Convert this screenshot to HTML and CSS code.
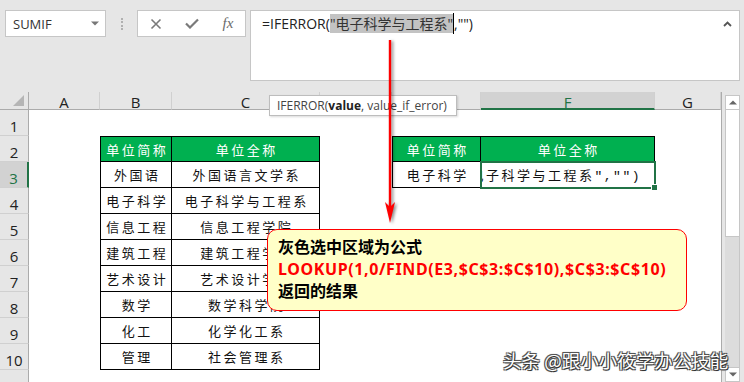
FILE: index.html
```html
<!DOCTYPE html>
<html lang="zh-CN">
<head>
    <meta charset="UTF-8">
    <title>IFERROR</title>
    <link rel="stylesheet" href="styles.css">
</head>
<body>
    <div class="formula-bar">
        <div class="name-box">
            <span>SUMIF</span>
            <svg class="drop" width="8" height="5" viewBox="0 0 8 5"><path d="M0 0.5h8L4 4.5z"/></svg>
        </div>
        <div class="grip"></div>
        <div class="fx-buttons">
            <!-- cancel -->
            <svg width="12" height="12" viewBox="0 0 12 12"><path d="M1.5 1.5l9 9M10.5 1.5l-9 9" stroke="#7a7a7a" stroke-width="1.6"/></svg>
            <!-- enter -->
            <svg width="14" height="11" viewBox="0 0 14 11"><path d="M1 5.5l4 4L13 1.5" stroke="#7a7a7a" stroke-width="2.2" fill="none"/></svg>
            <span class="fx">fx</span>
        </div>
        <div class="formula">
            <span class="ftext">=IFERROR(<span class="hl">"电子科学与工程系"</span><i class="caret"></i>,"")</span>
            <svg class="collapse" width="9" height="6" viewBox="0 0 9 6"><path d="M1 5l3.5-3.5L8 5" stroke="#555" stroke-width="1.8" fill="none"/></svg>
        </div>
    </div>

    <div class="workbook">
        <div class="sheet">
            <div class="col-heads">
                <div class="ch corner"><svg width="11" height="11" viewBox="0 0 11 11"><path d="M11 0v11H0z" fill="#b5b5b5"/></svg></div>
                <div class="ch" style="width:71px">A</div>
                <div class="ch" style="width:72px">B</div>
                <div class="ch" style="width:148px">C</div>
                <div class="ch" style="width:72px">D</div>
                <div class="ch" style="width:89px">E</div>
                <div class="ch on" style="width:174px">F</div>
                <div class="ch" style="width:66px">G</div>
            </div>
            <div class="sheet-body">
                <div class="row-heads">
                    <div class="rh">1</div>
                    <div class="rh">2</div>
                    <div class="rh on">3</div>
                    <div class="rh">4</div>
                    <div class="rh">5</div>
                    <div class="rh">6</div>
                    <div class="rh">7</div>
                    <div class="rh">8</div>
                    <div class="rh">9</div>
                    <div class="rh">10</div>
                    <div class="rh">11</div>
                </div>
                <div class="cells">
                    <div class="tbl t1">
                        <div class="cell hd">单位简称</div><div class="cell hd">单位全称</div>
                        <div class="cell">外国语</div><div class="cell">外国语言文学系</div>
                        <div class="cell">电子科学</div><div class="cell">电子科学与工程系</div>
                        <div class="cell">信息工程</div><div class="cell">信息工程学院</div>
                        <div class="cell">建筑工程</div><div class="cell">建筑工程学院</div>
                        <div class="cell">艺术设计</div><div class="cell">艺术设计学院</div>
                        <div class="cell">数学</div><div class="cell">数学科学院</div>
                        <div class="cell">化工</div><div class="cell">化学化工系</div>
                        <div class="cell">管理</div><div class="cell">社会管理系</div>
                    </div>
                    <div class="tbl t2">
                        <div class="cell hd">单位简称</div><div class="cell hd">单位全称</div>
                        <div class="cell">电子科学</div>
                        <div class="cell active"><span class="clip"><span>电子科学与工程系<span class="asc">","")</span></span></span></div>
                    </div>
                </div>
            </div>
        </div>
        <div class="vscroll">
            <div class="sb-up"><svg width="8" height="5" viewBox="0 0 8 5"><path d="M0 4.5h8L4 0.5z" fill="#666"/></svg></div>
            <div class="sb-thumb"></div>
            <div class="sb-track"></div>
            <div class="sb-down"><svg width="8" height="5" viewBox="0 0 8 5"><path d="M0 0.5h8L4 4.5z" fill="#666"/></svg></div>
        </div>
    </div>

    <!-- overlays -->
    <div class="tip">IFERROR(<b>value</b>, value_if_error)</div>

    <svg class="arrow" width="24" height="192" viewBox="0 0 24 192">
        <path d="M10 4V172" stroke="#ff0000" stroke-width="2.4"/>
        <path d="M10 187L5 166L10 171L15 166z" fill="#ff0000"/>
    </svg>

    <div class="callout">
        <div>灰色选中区域为公式</div>
        <div class="red">LOOKUP(1,0/FIND(E3,$C$3:$C$10),$C$3:$C$10)</div>
        <div>返回的结果</div>
    </div>

    <div class="mark">头条 @跟小小筱学办公技能</div>
</body>
</html>
```

FILE: styles.css
```css
body {
    margin: 0;
    width: 744px;
    height: 382px;
    overflow: hidden;
    position: relative;
    background: #e6e6e6;
    font-family: "Open Sans", "Noto Sans CJK SC", sans-serif;
    color: #222;
}

/* formula bar */
.formula-bar {
    display: flex;
    align-items: flex-start;
    height: 92px;
    padding-top: 10px;
    box-sizing: border-box;
}

.name-box {
    margin-left: 5px;
    width: 101px;
    height: 27px;
    box-sizing: border-box;
    border: 1px solid #c6c6c6;
    background: #fff;
    display: flex;
    align-items: center;
    justify-content: space-between;
    padding: 0 6px 0 7px;
    font-size: 13px;
    color: #333;
}

.drop { fill: #777; }

.grip {
    margin: 8px 0 0 15px;
    height: 12px;
    border-left: 2px dotted #b0b0b0;
}

.fx-buttons {
    margin-left: 14px;
    width: 109px;
    height: 27px;
    box-sizing: border-box;
    border: 1px solid #c6c6c6;
    background: #fff;
    display: grid;
    grid-template-columns: repeat(3, 36px);
    align-items: center;
    justify-items: center;
}

.fx {
    font-family: "Liberation Serif", serif;
    font-style: italic;
    font-size: 15px;
    color: #6a6a6a;
    line-height: 1;
}

.formula {
    margin-left: 4px;
    width: 490px;
    height: 71px;
    box-sizing: border-box;
    border: 1px solid #c6c6c6;
    background: #fff;
    display: flex;
    align-items: flex-start;
    padding: 2px 7px 0 11px;
    font-size: 14px;
    line-height: 21px;
    color: #222;
}

.ftext { white-space: nowrap; }

.hl {
    background: #c3c3c3;
    color: #333;
}

.caret {
    display: inline-block;
    width: 1px;
    height: 21px;
    background: #000;
    vertical-align: top;
}

.collapse { margin: 8px 0 0 auto; }

/* sheet */
.workbook {
    display: flex;
    align-items: flex-start;
}

.sheet {
    width: 722px;
    border-right: 1px solid #ababab;
    box-sizing: border-box;
}

.col-heads {
    display: flex;
    height: 18px;
}

.ch {
    box-sizing: border-box;
    height: 18px;
    border-right: 1px solid #d0d0d0;
    border-bottom: 1px solid #ababab;
    text-align: center;
    font-size: 15px;
    line-height: 18px;
    padding-top: 1px;
    color: #222;
}

.ch.corner {
    width: 29px;
    border-right-color: #ababab;
    display: flex;
    justify-content: flex-end;
    align-items: flex-end;
    padding: 0 4px 3px 0;
}

.ch.on, .rh.on {
    background: #d2d2d2;
    color: #217346;
}

.ch.on { border-bottom: 2px solid #217346; }

.sheet-body { display: flex; }

.row-heads { width: 29px; }

.rh {
    box-sizing: border-box;
    height: 26px;
    overflow: hidden;
    border-right: 1px solid #ababab;
    border-bottom: 1px solid #d0d0d0;
    text-align: center;
    font-size: 15px;
    line-height: 20px;
    padding-top: 6px;
    color: #222;
}

.rh.on { border-right: 2px solid #217346; }

.cells {
    width: 692px;
    background: #fff;
    display: grid;
    grid-template-columns: 71px 72px 148px 72px 89px 174px 66px;
    grid-template-rows: repeat(11, 26px);
}

.tbl {
    display: grid;
    box-sizing: border-box;
    border-top: 1px solid #000;
    border-left: 1px solid #000;
}

.t1 {
    grid-column: 2 / 4;
    grid-row: 2 / 11;
    grid-template-columns: 71px 148px;
    grid-template-rows: 25px repeat(8, 26px);
}

.t2 {
    grid-column: 5 / 7;
    grid-row: 2 / 4;
    grid-template-columns: 88px 174px;
    grid-template-rows: 25px 26px;
}

.cell {
    display: flex;
    align-items: center;
    justify-content: center;
    border-right: 1px solid #000;
    border-bottom: 1px solid #000;
    font-family: "Noto Sans CJK SC", sans-serif;
    font-size: 13px;
    letter-spacing: 2.5px;
    padding-left: 2.5px;
    color: #111;
    white-space: nowrap;
}

.cell.hd {
    background: #00b050;
    color: #fff;
}

.cell.active {
    position: relative;
    padding: 0 13px 0 0;
    outline: 2px solid #217346;
    outline-offset: -1px;
}

.cell.active::after {
    content: "";
    position: absolute;
    right: -4px;
    bottom: -4px;
    width: 5px;
    height: 5px;
    background: #217346;
    border: 1px solid #fff;
}

.clip {
    flex: 1;
    min-width: 0;
    overflow: hidden;
    display: flex;
    justify-content: flex-end;
}

.asc {
    font-family: "Liberation Mono", monospace;
    letter-spacing: 1.5px;
}

/* scroll bar */
.vscroll {
    margin: 3px 0 0 3px;
    width: 15px;
    height: 287px;
    display: flex;
    flex-direction: column;
}

.sb-up, .sb-down {
    height: 15px;
    box-sizing: border-box;
    border: 1px solid #c6c6c6;
    background: #fff;
    display: flex;
    align-items: center;
    justify-content: center;
}

.sb-thumb {
    height: 127px;
    box-sizing: border-box;
    border: 1px solid #c6c6c6;
    border-top: 0;
    background: #fff;
}

.sb-track {
    flex: 1;
    background: #dcdcdc;
    border-right: 1px solid #c6c6c6;
}

/* overlays */
.tip {
    position: absolute;
    left: 269px;
    top: 95px;
    width: 188px;
    height: 21px;
    box-sizing: border-box;
    border: 1px solid #bdbdbd;
    background: #fff;
    box-shadow: 1px 1px 2px rgba(0, 0, 0, 0.15);
    padding-left: 7px;
    font-size: 12px;
    line-height: 19px;
    color: #444;
    white-space: nowrap;
}

.tip b { color: #222; }

.arrow {
    position: absolute;
    left: 380px;
    top: 36px;
    filter: drop-shadow(2px 1px 1.5px rgba(0, 0, 0, 0.45));
}

.callout {
    position: absolute;
    left: 267px;
    top: 229px;
    width: 420px;
    height: 82px;
    box-sizing: border-box;
    border: 1px solid #ff0000;
    border-radius: 10px;
    background: #ffffc8;
    padding: 6px 0 0 10px;
    font-family: "Noto Sans", "Noto Sans CJK SC", sans-serif;
    font-size: 16px;
    font-weight: bold;
    line-height: 22px;
    color: #000;
}

.callout .red {
    color: #ff0000;
    letter-spacing: 0.6px;
}

.mark {
    position: absolute;
    left: 503px;
    top: 347px;
    font-family: "Noto Sans CJK SC", sans-serif;
    font-size: 18.5px;
    color: #fff;
    white-space: nowrap;
    text-shadow: 1px 1px 0 #333, -1px -1px 0 #555, 1px -1px 0 #555, -1px 1px 0 #555, 0 0 2px #000;
}
```
